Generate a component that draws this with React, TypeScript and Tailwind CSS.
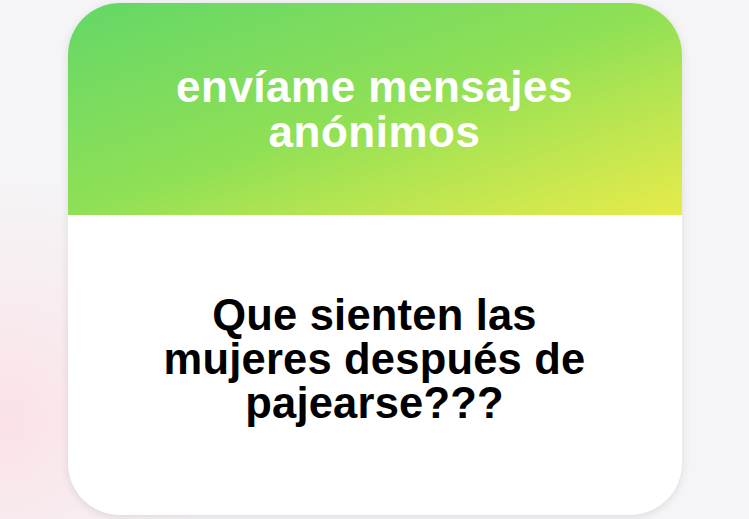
import React from 'react';

const App: React.FC = () => {
  return (
    <div
      className="w-[749px] h-[519px] overflow-hidden bg-[radial-gradient(ellipse_220px_260px_at_10px_420px,#fbe2e7_0%,#f7eef1_55%,#f5f5f7_100%)] flex justify-center pt-[3px]"
      style={{ fontFamily: '"Liberation Sans", Arial, sans-serif' }}
    >
      <div className="w-[614px] h-[512px] rounded-[52px] overflow-hidden bg-white shadow-[0_2px_10px_rgba(0,0,0,0.10)] flex flex-col">
        {/* Header */}
        <div className="h-[212px] bg-gradient-to-br from-[#62d767] via-[#8fe055] to-[#e6eb4a] flex items-center justify-center">
          <h1 className="text-white font-bold text-[44px] leading-[45px] tracking-[0.5px] text-center">
            envíame mensajes
            <br />
            anónimos
          </h1>
        </div>

        {/* Question */}
        <div className="flex-1 flex items-center justify-center pb-[12px]">
          <p className="text-black font-bold text-[43.5px] leading-[44px] tracking-[0.2px] text-center">
            Que sienten las
            <br />
            mujeres después de
            <br />
            pajearse???
          </p>
        </div>
      </div>
    </div>
  );
};

export default App;
